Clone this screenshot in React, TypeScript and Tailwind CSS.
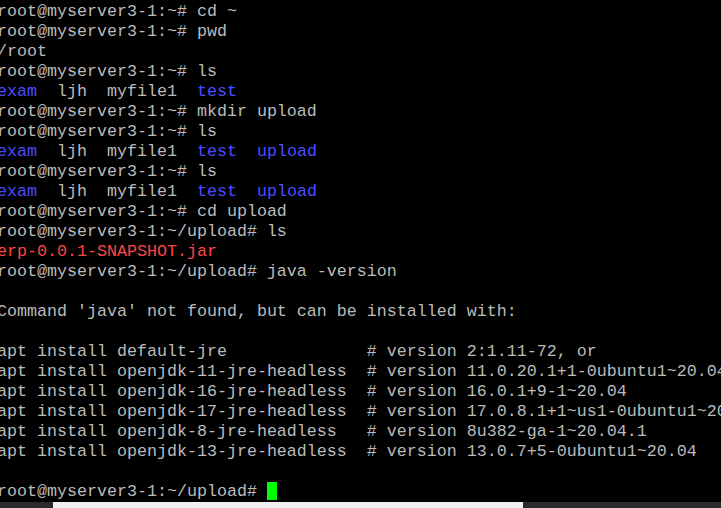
type Seg = { t: string; c?: "dir" | "jar" };
type Line = Seg[];

const P = "root@myserver3-1:~# ";
const PU = "root@myserver3-1:~/upload# ";

const ls: Line = [
  { t: "exam", c: "dir" },
  { t: "  ljh  myfile1  " },
  { t: "test", c: "dir" },
];
const lsUp: Line = [...ls, { t: "  " }, { t: "upload", c: "dir" }];

const lines: Line[] = [
  [{ t: P + "cd ~" }],
  [{ t: P + "pwd" }],
  [{ t: "/root" }],
  [{ t: P + "ls" }],
  ls,
  [{ t: P + "mkdir upload" }],
  [{ t: P + "ls" }],
  lsUp,
  [{ t: P + "ls" }],
  lsUp,
  [{ t: P + "cd upload" }],
  [{ t: PU + "ls" }],
  [{ t: "erp-0.0.1-SNAPSHOT.jar", c: "jar" }],
  [{ t: PU + "java -version" }],
  [{ t: "" }],
  [{ t: "Command 'java' not found, but can be installed with:" }],
  [{ t: "" }],
  [{ t: "apt install default-jre              # version 2:1.11-72, or" }],
  [{ t: "apt install openjdk-11-jre-headless  # version 11.0.20.1+1-0ubuntu1~20.04" }],
  [{ t: "apt install openjdk-16-jre-headless  # version 16.0.1+9-1~20.04" }],
  [{ t: "apt install openjdk-17-jre-headless  # version 17.0.8.1+1~us1-0ubuntu1~20.04" }],
  [{ t: "apt install openjdk-8-jre-headless   # version 8u382-ga-1~20.04.1" }],
  [{ t: "apt install openjdk-13-jre-headless  # version 13.0.7+5-0ubuntu1~20.04" }],
  [{ t: "" }],
];

function color(c?: Seg["c"]) {
  if (c === "dir") return "text-[#4c4cff]";
  if (c === "jar") return "text-[#ff4545]";
  return "";
}

export default function App() {
  return (
    <div className="flex h-[508px] w-[721px] flex-col overflow-hidden bg-black">
      <div className="ml-[-3px] pt-[2px] font-['Liberation_Mono',monospace] text-[16.67px] leading-[20px] text-[#bbbbbb]">
        {lines.map((line, i) => (
          <div key={i} className="h-[20px] whitespace-pre">
            {line.map((s, j) => (
              <span key={j} className={color(s.c)}>
                {s.t}
              </span>
            ))}
          </div>
        ))}
        <div className="flex h-[20px] items-center whitespace-pre">
          <span>{PU}</span>
          <span className="mt-[-2px] h-[18px] w-[10px] bg-[#00ff00]" />
        </div>
      </div>
      <div className="mt-auto flex h-[6px]">
        <div className="w-[53px] bg-[#2b2b2b]" />
        <div className="w-[470px] bg-[#f0f0f0]" />
        <div className="flex-1 bg-[#2b2b2b]" />
      </div>
    </div>
  );
}
